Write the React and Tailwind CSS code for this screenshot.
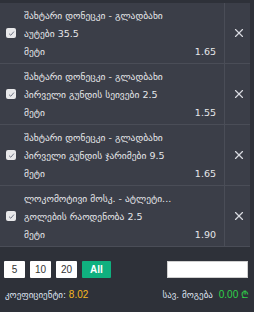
import { X } from 'lucide-react'

const bets = [
  { id: 1, match: 'შახტარი დონეცკი - გლადბახი', market: 'აუტები 35.5', pick: 'მეტი', odd: '1.65' },
  { id: 2, match: 'შახტარი დონეცკი - გლადბახი', market: 'პირველი გუნდის სეივები 2.5', pick: 'მეტი', odd: '1.55' },
  { id: 3, match: 'შახტარი დონეცკი - გლადბახი', market: 'პირველი გუნდის ჯარიმები 9.5', pick: 'მეტი', odd: '1.65' },
  { id: 4, match: 'ლოკომოტივი მოსკ. - ატლეტი...', market: 'გოლების რაოდენობა 2.5', pick: 'მეტი', odd: '1.90' },
]

function Check() {
  return (
    <span className="w-[10px] h-[10px] rounded-[2px] bg-[#e8e8ea] flex items-center justify-center flex-shrink-0">
      <svg width="7" height="7" viewBox="0 0 8 8" fill="none">
        <path d="M1.2 4.2 L3.2 6 L6.8 1.8" stroke="#6b7080" strokeWidth="1.1" />
      </svg>
    </span>
  )
}

function BetRow({ bet }) {
  return (
    <div className="flex h-[61px] border-b border-[#4a4d57] bg-[#3b3e48]">
      <div className="flex items-center pl-[6px] pr-[8px]">
        <Check />
      </div>
      <div className="flex-1 min-w-0 flex flex-col justify-center gap-[5px] pr-[6px] text-[9.5px] text-[#e6e7ea] leading-[13px]">
        <p className="truncate">{bet.match}</p>
        <p className="truncate">{bet.market}</p>
        <div className="flex justify-between pr-[2px]">
          <span>{bet.pick}</span>
          <span>{bet.odd}</span>
        </div>
      </div>
      <div className="w-[26px] border-l border-[#4a4d57] flex items-center justify-center pl-[3px]">
        <X size={14} strokeWidth={2} className="text-[#d8dae0]" />
      </div>
    </div>
  )
}

export default function App() {
  return (
    <div className="w-[254px] h-[312px] bg-[#2e3139] flex flex-col font-['DejaVu_Sans',sans-serif]">
      <div className="pt-[3px] pr-[4px]">
        {bets.map(b => <BetRow key={b.id} bet={b} />)}
      </div>
      <div className="flex items-center justify-between px-[4px] mt-[14px]">
        <div className="flex gap-[5px] text-[10px] font-['Liberation_Sans',sans-serif]">
          <button className="w-[21px] h-[17px] bg-white text-[#333] rounded-[1px]">5</button>
          <button className="w-[21px] h-[17px] bg-white text-[#333] rounded-[1px]">10</button>
          <button className="w-[21px] h-[17px] bg-white text-[#333] rounded-[1px]">20</button>
          <button className="w-[29px] h-[17px] bg-[#10b07f] text-white font-bold rounded-[1px]">All</button>
        </div>
        <input className="w-[81px] h-[17px] bg-white border border-[#d0d0d0] mr-[2px]" />
      </div>
      <div className="flex items-center justify-between px-[5px] mt-[9px] text-[9px]">
        <span className="text-[#dfe3f0]">კოეფიციენტი: <span className="text-[#f5b820] font-['Liberation_Sans',sans-serif] text-[10px]">8.02</span></span>
        <span className="text-[#dfe3f0]">სავ. მოგება <span className="text-[#2fd24a] font-['Liberation_Sans',sans-serif] text-[10px] ml-[3px]">0.00 ₾</span></span>
      </div>
    </div>
  )
}
